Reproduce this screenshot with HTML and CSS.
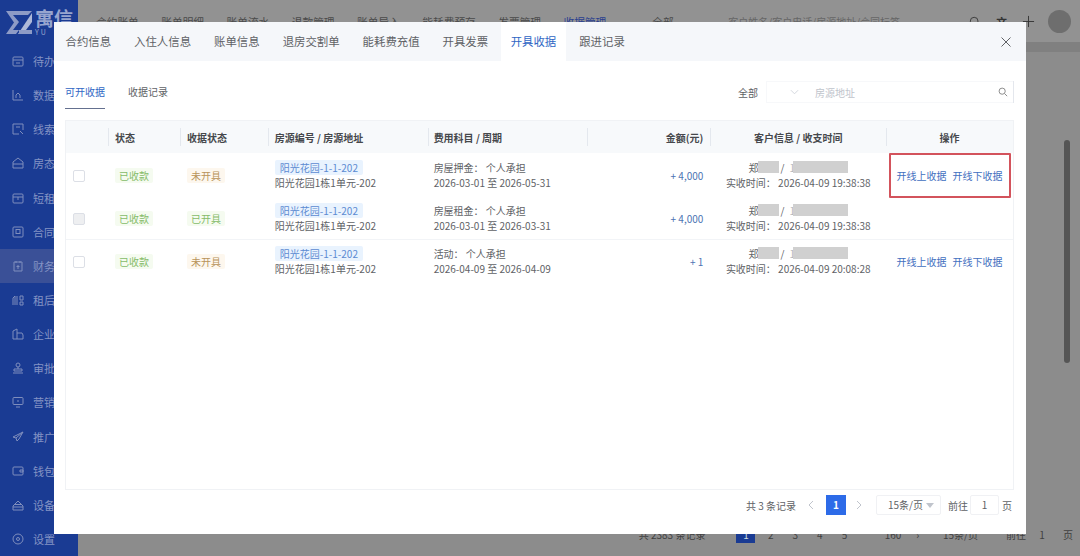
FILE: index.html
```html
<!DOCTYPE html>
<html lang="zh-CN">
<head>
    <meta charset="UTF-8">
    <meta name="viewport" content="width=device-width, initial-scale=1.0">
    <title>收据管理</title>
    <link rel="stylesheet" href="styles.css">
</head>
<body>

<div class="app">
    <!-- Sidebar -->
    <aside class="sidebar">
        <div class="logo">
            <svg class="logo-mark" viewBox="0 0 26 23" width="26" height="23"><path d="M0 0h26l-4 4H7l6 7-6 8h6l-3 4H0l8-11.500z" fill="#8d9bc6"/><path d="M26 2L12 23h5l9-12z" fill="#aeb9d8"/><path d="M13 19h13v4H13z" fill="#8d9bc6"/></svg>
            <div class="logo-text">
                <div class="logo-cn">寓信</div>
                <div class="logo-en">YU</div>
            </div>
        </div>
        <div class="side-item"><svg class="side-icon" viewBox="0 0 12 12"><rect x="1" y="2" width="10" height="9" rx="1"/><path d="M1 5h10M4 8h4"/></svg>待办</div>
        <div class="side-item"><svg class="side-icon" viewBox="0 0 12 12"><path d="M1 1v10h10M4 9V6l2-2 2 2v3"/></svg>数据</div>
        <div class="side-item"><svg class="side-icon" viewBox="0 0 12 12"><path d="M11 7V1H1v10h6M8 8l3 3M4 4h4"/></svg>线索</div>
        <div class="side-item"><svg class="side-icon" viewBox="0 0 12 12"><path d="M1 5l5-4 5 4v6H1zM1 7h10"/></svg>房态</div>
        <div class="side-item"><svg class="side-icon" viewBox="0 0 12 12"><rect x="1" y="2" width="10" height="9" rx="1"/><path d="M1 5h10M6 5v3"/></svg>短租</div>
        <div class="side-item"><svg class="side-icon" viewBox="0 0 12 12"><rect x="1" y="1" width="10" height="10" rx="1"/><rect x="4" y="3.500" width="4" height="4"/></svg>合同</div>
        <div class="side-item side-active"><svg class="side-icon" viewBox="0 0 12 12"><path d="M2 2h8v9H2zM4 1v2M8 1v2M6 5v4M4.500 6.500h3"/></svg>财务</div>
        <div class="side-item"><svg class="side-icon" viewBox="0 0 12 12"><path d="M1 11V4l2-2v9M5 11V2M8 2h3v4H8zM8 8h3v3H8z"/></svg>租后</div>
        <div class="side-item"><svg class="side-icon" viewBox="0 0 12 12"><path d="M1 11V3l4-2v10M5 5h5l1 2v4H1"/></svg>企业</div>
        <div class="side-item"><svg class="side-icon" viewBox="0 0 12 12"><circle cx="6" cy="3" r="2"/><path d="M6 5v2M2 7h8v2H2zM1 11h10"/></svg>审批</div>
        <div class="side-item"><svg class="side-icon" viewBox="0 0 12 12"><rect x="1" y="1.500" width="10" height="7" rx="1"/><path d="M4 11h4M6 4v2"/></svg>营销</div>
        <div class="side-item"><svg class="side-icon" viewBox="0 0 12 12"><path d="M11 1L1 6l3 1 1 3 2-2 4-7zM4 7l7-6"/></svg>推广</div>
        <div class="side-item"><svg class="side-icon" viewBox="0 0 12 12"><rect x="1" y="2" width="10" height="8" rx="1"/><path d="M8 5h3v2H8z"/></svg>钱包</div>
        <div class="side-item"><svg class="side-icon" viewBox="0 0 12 12"><path d="M1 11V7l5-5 5 5v4zM1 8h10M3 5.500h6"/></svg>设备</div>
        <div class="side-item"><svg class="side-icon" viewBox="0 0 12 12"><circle cx="6" cy="6" r="5"/><circle cx="6" cy="6" r="1.500"/></svg>设置</div>
    </aside>

    <!-- Page behind the dialog -->
    <main class="page">
        <header class="topbar">
            <nav class="topnav">
                <span>合约账单</span><span>账单明细</span><span>账单流水</span><span>退款管理</span><span>账单导入</span><span>能耗费预存</span><span>发票管理</span><span class="topnav-on">收据管理</span>
            </nav>
            <div class="top-select">全部</div>
            <div class="top-search">客户姓名/客户电话/房源地址/合同标签</div>
            <div class="top-icons">
                <svg viewBox="0 0 14 14" width="12" height="12"><circle cx="6" cy="6" r="4.500"/><path d="M9.500 9.500L13 13"/></svg>
                <span class="top-trans">文</span>
                <svg viewBox="0 0 14 14" width="13" height="13"><path d="M7 1v12M1 7h12"/></svg>
                <div class="avatar"></div>
            </div>
        </header>
        <div class="page-body">
            <div class="page-card">
                <div class="page-scroll"></div>
            </div>
            <div class="page-foot">
                <span class="foot-total">共 2383 条记录</span>
                <span class="foot-cur">1</span>
                <span class="foot-num">2</span><span class="foot-num">3</span><span class="foot-num">4</span><span class="foot-num">5</span>
                <span class="foot-num foot-far">160</span><span class="foot-num">›</span>
                <span class="foot-size">15条/页</span>
                <span class="foot-goto">前往</span><span class="foot-input">1</span><span class="foot-unit">页</span>
            </div>
        </div>
    </main>
</div>

<!-- Dialog -->
<div class="dialog">
    <div class="tabs">
        <div class="tab">合约信息</div>
        <div class="tab">入住人信息</div>
        <div class="tab">账单信息</div>
        <div class="tab">退房交割单</div>
        <div class="tab">能耗费充值</div>
        <div class="tab">开具发票</div>
        <div class="tab tab-on">开具收据</div>
        <div class="tab">跟进记录</div>
        <svg class="close" viewBox="0 0 10 10" width="10" height="10"><path d="M.5.5l9 9M9.500.5l-9 9"/></svg>
    </div>

    <div class="dialog-body">
        <div class="subbar">
            <div class="subtabs">
                <div class="subtab subtab-on">可开收据</div>
                <div class="subtab">收据记录</div>
            </div>
            <div class="filter">
                <span class="filter-all">全部</span>
                <div class="filter-box">
                    <svg class="filter-arrow" viewBox="0 0 10 6" width="9" height="6"><path d="M1 1l4 4 4-4"/></svg>
                    <span class="filter-input">房源地址</span>
                    <svg class="filter-search" viewBox="0 0 12 12" width="10" height="10"><circle cx="5" cy="5" r="3.700"/><path d="M8 8l3 3"/></svg>
                </div>
            </div>
        </div>

        <div class="table">
            <div class="row head">
                <div class="cell c-check"></div>
                <div class="cell c-state">状态</div>
                <div class="cell c-receipt">收据状态</div>
                <div class="cell c-house">房源编号 / 房源地址</div>
                <div class="cell c-fee">费用科目 / 周期</div>
                <div class="cell c-money">金额(元)</div>
                <div class="cell c-user">客户信息 / 收支时间</div>
                <div class="cell c-op">操作</div>
            </div>

            <div class="row">
                <div class="cell c-check"><span class="check"></span></div>
                <div class="cell c-state"><span class="tag tag-green">已收款</span></div>
                <div class="cell c-receipt"><span class="tag tag-orange">未开具</span></div>
                <div class="cell c-house"><span class="house-no">阳光花园-1-1-202</span><span>阳光花园1栋1单元-202</span></div>
                <div class="cell c-fee"><span>房屋押金：&nbsp;个人承担</span><span>2026-03-01 至 2026-05-31</span></div>
                <div class="cell c-money">+ 4,000</div>
                <div class="cell c-user"><span class="who">郑<i class="mask mask-a"></i>/<b class="who-tel">1</b><i class="mask mask-b"></i></span><span>实收时间：&nbsp;2026-04-09 19:38:38</span></div>
                <div class="cell c-op"><a>开线上收据</a><a>开线下收据</a><div class="mark"></div></div>
            </div>

            <div class="row row-line">
                <div class="cell c-check"><span class="check check-off"></span></div>
                <div class="cell c-state"><span class="tag tag-green">已收款</span></div>
                <div class="cell c-receipt"><span class="tag tag-green">已开具</span></div>
                <div class="cell c-house"><span class="house-no">阳光花园-1-1-202</span><span>阳光花园1栋1单元-202</span></div>
                <div class="cell c-fee"><span>房屋租金：&nbsp;个人承担</span><span>2026-03-01 至 2026-03-31</span></div>
                <div class="cell c-money">+ 4,000</div>
                <div class="cell c-user"><span class="who">郑<i class="mask mask-a"></i>/<b class="who-tel">1</b><i class="mask mask-b"></i></span><span>实收时间：&nbsp;2026-04-09 19:38:38</span></div>
                <div class="cell c-op"></div>
            </div>

            <div class="row">
                <div class="cell c-check"><span class="check"></span></div>
                <div class="cell c-state"><span class="tag tag-green">已收款</span></div>
                <div class="cell c-receipt"><span class="tag tag-orange">未开具</span></div>
                <div class="cell c-house"><span class="house-no">阳光花园-1-1-202</span><span>阳光花园1栋1单元-202</span></div>
                <div class="cell c-fee"><span>活动：&nbsp;个人承担</span><span>2026-04-09 至 2026-04-09</span></div>
                <div class="cell c-money">+ 1</div>
                <div class="cell c-user"><span class="who">郑<i class="mask mask-a"></i>/<b class="who-tel">1</b><i class="mask mask-b"></i></span><span>实收时间：&nbsp;2026-04-09 20:08:28</span></div>
                <div class="cell c-op"><a>开线上收据</a><a>开线下收据</a></div>
            </div>
        </div>

        <div class="pager">
            <span class="pager-total">共 3 条记录</span>
            <svg class="pager-arrow" viewBox="0 0 6 10" width="6" height="10"><path d="M5 1L1 5l4 4"/></svg>
            <span class="pager-cur">1</span>
            <svg class="pager-arrow" viewBox="0 0 6 10" width="6" height="10"><path d="M1 1l4 4-4 4"/></svg>
            <span class="pager-size">15条/页<i class="pager-caret"></i></span>
            <span class="pager-goto">前往</span>
            <span class="pager-input">1</span>
            <span>页</span>
        </div>
    </div>
</div>

</body>
</html>
```

FILE: styles.css
```css
* {
    box-sizing: border-box;
}
html, body {
    margin: 0;
    height: 100%;
    overflow: hidden;
}
body {
    font-family: "Noto Sans CJK SC", "Liberation Sans", sans-serif;
    font-size: 10px;
    color: #606266;
    background-color: #8c8c8c;
}
.app {
    display: flex;
    height: 556px;
}

/* Sidebar */
.sidebar {
    width: 78px;
    background-color: #1a3b93;
    color: #8493c4;
    padding-top: 8px;
    flex-shrink: 0;
}
.logo {
    display: flex;
    align-items: flex-start;
    gap: 3px;
    height: 36px;
    padding: 3px 0 0 6px;
}
.logo-text {
    color: #97a5cf;
    line-height: 1;
    margin-top: -3px;
}
.logo-cn {
    font-size: 19px;
    line-height: 20px;
    font-weight: 700;
    white-space: nowrap;
}
.logo-en {
    font-size: 7px;
    line-height: 8px;
    letter-spacing: 2px;
}
.side-item {
    display: flex;
    align-items: center;
    gap: 9px;
    height: 34.150px;
    padding-left: 12px;
    font-size: 11px;
    white-space: nowrap;
}
.side-active {
    background-color: #3a5097;
}
.side-icon {
    width: 12px;
    height: 12px;
    fill: none;
    stroke: #7f8ebd;
    stroke-width: 1;
    flex-shrink: 0;
}

/* Page behind the dialog */
.page {
    flex: 1;
    display: flex;
    flex-direction: column;
    min-width: 0;
}
.topbar {
    display: flex;
    align-items: center;
    height: 42px;
    background-color: #929292;
    color: #4a4a4a;
    padding: 1px 0 0 18px;
    font-size: 10.700px;
    white-space: nowrap;
}
.topnav {
    display: flex;
    gap: 22.500px;
}
.topnav-on {
    color: #2a3f8f;
}
.top-select {
    margin-left: 46px;
    width: 76px;
}
.top-search {
    font-size: 10px;
    color: #666;
}
.top-icons {
    display: flex;
    align-items: center;
    gap: 15px;
    margin-left: auto;
    padding-right: 9px;
}
.top-icons svg {
    fill: none;
    stroke: #333;
}
.top-trans {
    font-weight: 700;
    color: #333;
}
.avatar {
    width: 23px;
    height: 23px;
    margin-left: -2px;
    border-radius: 50%;
    background-color: #6e6e6e;
}
.page-body {
    flex: 1;
    display: flex;
    flex-direction: column;
    background-color: #808080;
    padding-top: 10px;
}
.page-card {
    flex: 1;
    display: flex;
    justify-content: flex-end;
    align-items: flex-start;
    background-color: #8c8c8c;
}
.page-scroll {
    width: 6px;
    margin: 88px 10px 0 0;
    height: 223px;
    background-color: #555;
    border-radius: 3px;
}
.page-foot {
    display: flex;
    align-items: center;
    justify-content: flex-end;
    height: 36px;
    background-color: #8c8c8c;
    color: #404040;
    padding: 0 7px 8px 0;
    white-space: nowrap;
}
.foot-cur {
    width: 19px;
    height: 17px;
    line-height: 17px;
    margin: 0 3px 0 31px;
    text-align: center;
    background-color: #1a3b93;
    color: #cdd;
}
.foot-num {
    width: 24.600px;
    text-align: center;
}
.foot-far {
    margin-left: 24px;
}
.foot-size {
    margin-left: 13px;
}
.foot-goto {
    margin-left: 28px;
}
.foot-input {
    width: 20px;
    margin-left: 6px;
    text-align: center;
}
.foot-unit {
    margin-left: 11px;
}

/* Dialog */
.dialog {
    position: fixed;
    left: 54px;
    top: 22px;
    width: 972px;
    height: 512px;
    background-color: #fff;
    display: flex;
    flex-direction: column;
}
.tabs {
    display: flex;
    align-items: center;
    height: 39px;
    background-color: #f5f7fa;
    flex-shrink: 0;
}
.tab {
    padding: 0 11.500px;
    height: 100%;
    line-height: 39px;
    font-size: 11.400px;
    color: #5f6266;
    white-space: nowrap;
}
.tab-on {
    background-color: #fff;
    color: #2f66c4;
    padding: 0 10px;
    margin: 0 1.500px 0 1px;
}
.close {
    margin-left: auto;
    margin-right: 15px;
    fill: none;
    stroke: #606266;
}
.dialog-body {
    flex: 1;
    display: flex;
    flex-direction: column;
    padding: 0 12px 0 11px;
    min-height: 0;
}
.subbar {
    display: flex;
    justify-content: space-between;
    align-items: flex-start;
    height: 59px;
    padding-top: 22px;
}
.subtabs {
    display: flex;
    gap: 23px;
}
.subtab {
    height: 26px;
    line-height: 18px;
    color: #606266;
}
.subtab-on {
    color: #2f66c4;
    border-bottom: 1.500px solid #64708f;
}
.filter {
    display: flex;
    align-items: center;
    width: 276px;
    height: 22px;
    margin-top: -2px;
    border-right: 1px solid #e4e7ed;
}
.filter-all {
    width: 28px;
}
.filter-box {
    display: flex;
    align-items: center;
    width: 247px;
    height: 22px;
    border: 1px solid #f7f8fa;
    border-right: 0;
}
.filter-arrow {
    fill: none;
    stroke: #cfd3da;
    margin: 0 16px 0 23px;
}
.filter-input {
    color: #c0c4cc;
    flex: 1;
}
.filter-search {
    fill: none;
    stroke: #777;
    margin-right: 5px;
}

/* Table */
.table {
    flex: 1;
    border: 1px solid #f0f2f5;
    min-height: 0;
}
.row {
    display: flex;
    height: 43px;
}
.row-line {
    box-shadow: 0 1px 0 #f2f4f7;
}
.head {
    height: 32px;
    background-color: #f7f9fb;
    font-weight: 700;
    color: #46484c;
}
.cell {
    display: flex;
    flex-direction: column;
    justify-content: center;
    line-height: 15px;
    padding-left: 7px;
    white-space: nowrap;
    position: relative;
}
.head .cell + .cell::before {
    content: "";
    position: absolute;
    left: 0;
    top: 7px;
    bottom: 7px;
    width: 1px;
    background-color: #e4e8ee;
}
.c-check { width: 42px; }
.c-state { width: 72px; }
.c-receipt { width: 88px; }
.c-house { width: 160px; align-items: flex-start; }
.c-fee { width: 160px; padding-left: 6px; }
.c-money { width: 123px; text-align: right; padding-right: 7px; color: #4d74b3; }
.c-user { width: 176px; text-align: center; padding-left: 0; }
.c-op { width: 127px; flex-direction: row; align-items: center; justify-content: center; gap: 6px; padding-left: 0; }
.head .c-money { color: #46484c; }
/* one-line cells sit a little below the middle of the row */
.row:not(.head) .c-check,
.row:not(.head) .c-state,
.row:not(.head) .c-receipt,
.row:not(.head) .c-money,
.row:not(.head) .c-op {
    padding-top: 2px;
}
.c-op a {
    color: #3f6fc0;
}
.check {
    width: 12px;
    height: 12px;
    border: 1px solid #dcdfe6;
    border-radius: 2px;
    background-color: #fff;
}
.check-off {
    background-color: #eeeff1;
}
.tag {
    align-self: flex-start;
    height: 15px;
    line-height: 15px;
    padding: 0 4px;
    border-radius: 2px;
}
.tag-green {
    color: #86bb6a;
    background-color: #f5fbf0;
}
.tag-orange {
    color: #b8935a;
    background-color: #fdf7ee;
}
.house-no {
    color: #5c8bd2;
    background-color: #e9f3fe;
    padding: 0 5px;
    border-radius: 2px;
}
.who {
    display: flex;
    align-items: center;
    justify-content: center;
}
.who-tel {
    font-weight: 400;
    color: #b5b7bb;
    margin-left: 5px;
}
.mask {
    display: inline-block;
    height: 12px;
    background-color: #d0d0d0;
}
.mask-a {
    width: 21px;
    margin-right: 1px;
}
.mask-b {
    width: 55px;
    margin-left: -2px;
}
.mark {
    position: absolute;
    left: 3px;
    top: 0;
    width: 122px;
    height: 45px;
    border: 2.500px solid #d3535c;
    border-radius: 1px;
}

/* Pager */
.pager {
    display: flex;
    align-items: center;
    justify-content: flex-end;
    height: 44px;
    padding: 0 2px 14px 0;
    flex-shrink: 0;
}
.pager-total {
    margin-right: 12px;
}
.pager-arrow {
    fill: none;
    stroke: #c0c4cc;
}
.pager-cur {
    width: 20px;
    height: 20px;
    line-height: 20px;
    text-align: center;
    margin: 0 10px 0 12px;
    background-color: #2d6be8;
    color: #fff;
    font-weight: 700;
}
.pager-size {
    position: relative;
    width: 65px;
    height: 20px;
    line-height: 18px;
    margin-left: 14px;
    padding-left: 11px;
    border: 1px solid #f0f1f4;
    border-radius: 2px;
}
.pager-caret {
    position: absolute;
    right: 6px;
    top: 7px;
    border: 4px solid transparent;
    border-top: 5px solid #c0c4cc;
    border-bottom: 0;
}
.pager-goto {
    margin: 0 2px 0 7px;
}
.pager-input {
    width: 29px;
    height: 20px;
    line-height: 18px;
    text-align: center;
    margin-right: 3px;
    border: 1px solid #f0f1f4;
    border-radius: 2px;
}
```
